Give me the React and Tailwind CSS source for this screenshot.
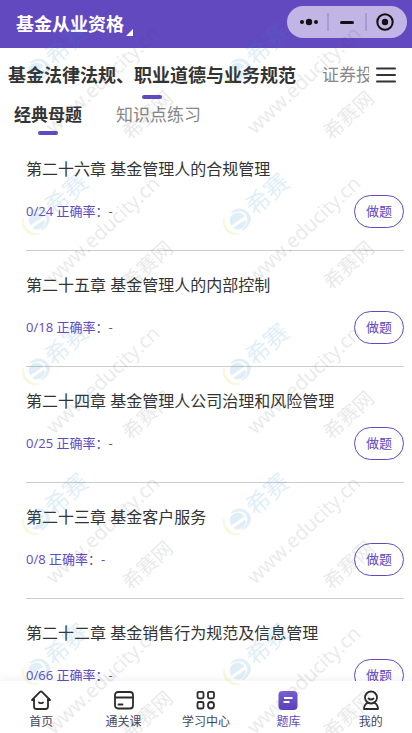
import React from "react";

const chapters = [
  { title: "第二十六章 基金管理人的合规管理", total: 24 },
  { title: "第二十五章 基金管理人的内部控制", total: 18 },
  { title: "第二十四章 基金管理人公司治理和风险管理", total: 25 },
  { title: "第二十三章 基金客户服务", total: 8 },
  { title: "第二十二章 基金销售行为规范及信息管理", total: 66 },
];

function HomeIcon() {
  return (
    <svg viewBox="0 0 20 20" className="h-5 w-5" fill="none" stroke="#2b2b2b" strokeWidth="1.8" strokeLinecap="round" strokeLinejoin="round" aria-hidden="true">
      <path d="M3 9.500v7Q3 19 5.500 19h9q2.500 0 2.500-2.500v-7" />
      <path d="M1 10 9 1.900q1-0.900 2 0L19 10H17M1 10h2" />
      <path d="M8 12.500q2 1.400 4 0" />
    </svg>
  );
}

function CardIcon() {
  return (
    <svg viewBox="0 0 20 20" className="h-5 w-5" fill="none" stroke="#2b2b2b" strokeWidth="1.8" strokeLinecap="round" aria-hidden="true">
      <rect x="1" y="2" width="18" height="16.500" rx="3" />
      <path d="M1.500 7.500h17" strokeWidth="2.200" />
      <path d="M4.500 14.500h4" />
    </svg>
  );
}

function GridIcon() {
  return (
    <svg viewBox="0 0 20 20" className="h-5 w-5" fill="none" stroke="#2b2b2b" strokeWidth="1.8" aria-hidden="true">
      <rect x="1.500" y="1.800" width="6" height="6.500" rx="1.500" />
      <rect x="12" y="1.800" width="6" height="6.500" rx="1.500" />
      <rect x="1.500" y="12" width="6" height="6.500" rx="1.500" />
      <rect x="12" y="12" width="6" height="6.500" rx="3" />
    </svg>
  );
}

function BankIcon() {
  return (
    <svg viewBox="0 0 20 20" className="h-5 w-5" aria-hidden="true">
      <defs>
        <linearGradient id="bank" x1="0" y1="0" x2="0" y2="1">
          <stop offset="0" stopColor="#7a5fd8" />
          <stop offset="1" stopColor="#5a3fb8" />
        </linearGradient>
      </defs>
      <rect x="0.500" y="1" width="19" height="19" rx="4" fill="url(#bank)" />
      <path d="M6 8h8.500M5.500 12h6" stroke="#fff" strokeWidth="1.800" />
    </svg>
  );
}

function UserIcon() {
  return (
    <svg viewBox="0 0 20 20" className="h-5 w-5" fill="none" stroke="#2b2b2b" strokeWidth="1.800" strokeLinecap="round" strokeLinejoin="round" aria-hidden="true">
      <circle cx="10" cy="7.500" r="6" />
      <path d="M7.500 8.500q2.500 2 5 0" />
      <path d="M6.500 12.800Q3 15 3 19h14q0-4-3.500-6.200" />
    </svg>
  );
}

const navItems = [
  { label: "首页", Icon: HomeIcon },
  { label: "通关课", Icon: CardIcon },
  { label: "学习中心", Icon: GridIcon },
  { label: "题库", Icon: BankIcon, active: true },
  { label: "我的", Icon: UserIcon },
];

function Watermark() {
  const tiles = [];
  for (let row = 0; row < 5; row++) {
    for (let col = 0; col < 2; col++) tiles.push([col * 201, row * 150]);
  }
  return (
    <svg className="pointer-events-none absolute inset-0 h-full w-full font-['Open_Sans','Noto_Sans_CJK_SC',sans-serif]" aria-hidden="true">
      {tiles.map(([x, y]) => (
        <g key={x + "-" + y} transform={`translate(${x} ${y})`}>
          <g opacity="0.14">
            <g transform="translate(37 71) rotate(-35)">
              <path d="M-8 0A8 8 0 0 1 8-1V0Z" fill="#2f8fd0" />
              <path d="M-8 3H7A8 8 0 0 1-8 3Z" fill="#2f8fd0" />
            </g>
            <path d="M30 63Q36 57 43 60 51 64 49 71 47 78 41 80 47 75 47 69 46 63 41 61 36 60 30 63Z" fill="#2f8fd0" stroke="#2f8fd0" />
            <path d="M23 68Q21 78 28 83 33 86 39 84 32 84 28 80 23 76 23 68Z" fill="#c8d820" stroke="#c8d820" />
            <text transform="translate(57 52) rotate(-42)" x="-12" y="9" fontSize="24" fill="#2f8fd0">希赛</text>
          </g>
          <g fill="#444" opacity="0.11">
            <text transform="translate(54 135) rotate(-43)" fontSize="20">www.educity.cn</text>
            <text transform="translate(133 129) rotate(-43)" x="-10" y="7" fontSize="20">希赛网</text>
          </g>
        </g>
      ))}
    </svg>
  );
}

export default function App() {
  return (
    <div className="relative flex h-screen flex-col overflow-hidden bg-white font-['Open_Sans','Noto_Sans_CJK_SC',sans-serif] text-[#333]">
      <header className="flex h-12 shrink-0 items-center justify-between bg-[#6349c0] pr-[5px] pl-4">
        <button className="flex items-end gap-0.5 text-lg leading-6 font-bold text-white">
          基金从业资格
          <svg viewBox="0 0 7 7" className="h-[7px] w-[7px]" aria-hidden="true">
            <path d="M7 0v7H0z" fill="#fff" />
          </svg>
        </button>
        <div className="mb-1 flex h-8 w-[120px] items-center rounded-full bg-[#c0b5e5] text-[#111]">
          <button aria-label="更多" className="flex h-full flex-1 items-center justify-center pl-1">
            <svg viewBox="0 0 20 8" className="h-2 w-5" fill="currentColor" aria-hidden="true">
              <circle cx="3" cy="4" r="2" />
              <circle cx="10" cy="4" r="3.200" />
              <circle cx="17" cy="4" r="2" />
            </svg>
          </button>
          <span className="h-[18px] w-0.5 bg-[#a79bcf]" />
          <button aria-label="最小化" className="flex h-full w-9 items-center justify-center">
            <span className="h-[3px] w-[14px] rounded-full bg-[#111]" />
          </button>
          <span className="h-[18px] w-0.5 bg-[#a79bcf]" />
          <button aria-label="关闭" className="flex h-full flex-1 items-center justify-center pr-1">
            <svg viewBox="0 0 18 18" className="h-[18px] w-[18px]" aria-hidden="true">
              <circle cx="9" cy="9" r="7.700" fill="none" stroke="currentColor" strokeWidth="2" />
              <circle cx="9" cy="9" r="3.200" fill="currentColor" />
            </svg>
          </button>
        </div>
      </header>

      <div className="flex h-[52px] shrink-0 items-start pt-[13px] pr-4 pl-2">
        <div className="flex min-w-0 flex-1 gap-[26px] overflow-hidden whitespace-nowrap">
          <button className="flex shrink-0 flex-col items-center gap-1.5 text-lg leading-7 font-bold">
            基金法律法规、职业道德与业务规范
            <span className="h-1 w-5 rounded-full bg-[#6349c0]" />
          </button>
          <button className="shrink-0 self-start text-[17px] leading-7 text-[#888]">证券投</button>
        </div>
        <button aria-label="全部科目" className="ml-[7px] flex h-7 items-center">
          <svg viewBox="0 0 20 16" className="h-4 w-5" stroke="#333" strokeWidth="2" strokeLinecap="round" aria-hidden="true">
            <path d="M1 1.500h18M1 8h18M1 14.500h18" />
          </svg>
        </button>
      </div>

      <div className="flex shrink-0 items-start gap-[34px] pt-px pl-[14px] text-[17px] leading-7">
        <button className="flex flex-col items-center gap-0.5 font-bold">
          经典母题
          <span className="h-1 w-5 rounded-full bg-[#6349c0]" />
        </button>
        <button className="text-[#888]">知识点练习</button>
      </div>

      <main className="min-h-0 flex-1 overflow-hidden pr-2 pl-[26px]">
        {chapters.map((c) => (
          <section key={c.title} className="flex h-[116px] flex-col justify-end gap-3.5 border-b border-[#ccc] pb-[22px]">
            <h2 className="text-base leading-6">{c.title}</h2>
            <div className="flex items-center justify-between text-[13px] text-[#6349c0]">
              <p>0/{c.total} 正确率：-</p>
              <button className="h-[33px] w-[50px] rounded-full border border-[#6349c0]">做题</button>
            </div>
          </section>
        ))}
      </main>

      <nav className="grid h-[52px] shrink-0 grid-cols-5 bg-white shadow-[0_-2px_10px_rgba(0,0,0,0.06)]">
        {navItems.map(({ label, Icon, active }) => (
          <a
            key={label}
            href="#"
            aria-current={active ? "page" : undefined}
            className={active ? "flex flex-col items-center pt-[9px] text-xs text-[#6349c0]" : "flex flex-col items-center pt-[9px] text-xs text-[#45455f]"}
          >
            <Icon />
            <span className="mt-1 leading-4">{label}</span>
          </a>
        ))}
      </nav>
      <Watermark />
    </div>
  );
}
